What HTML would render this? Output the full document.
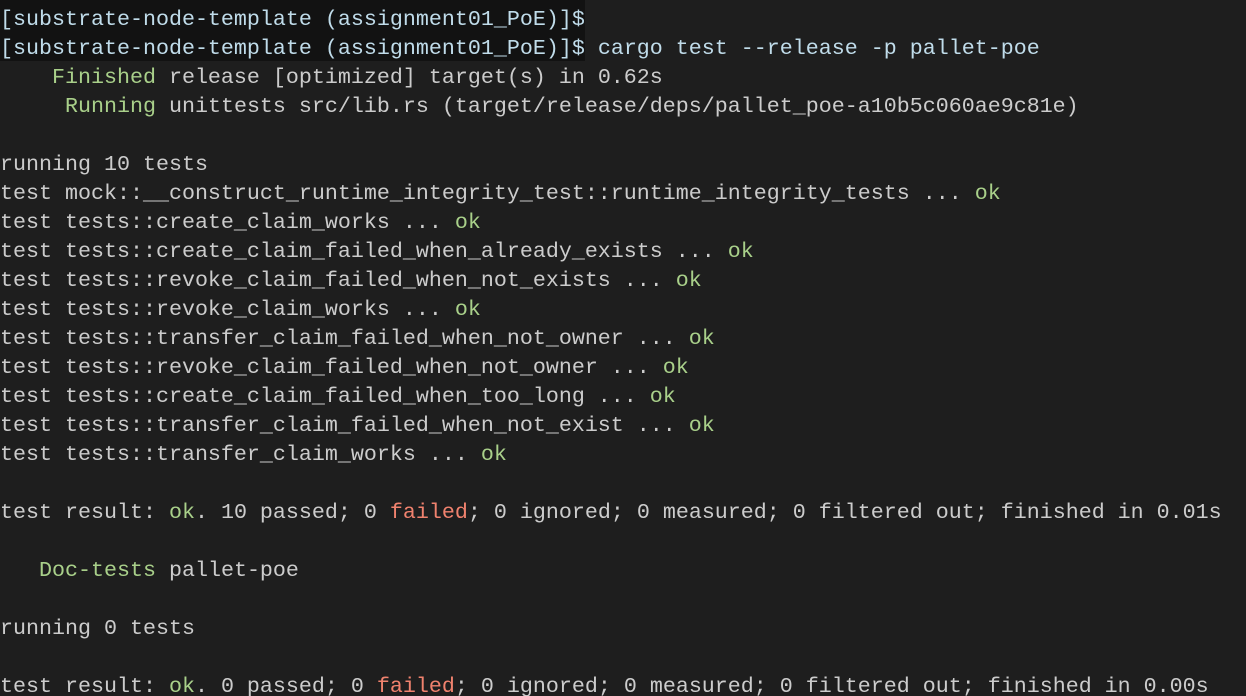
<!DOCTYPE html>
<html><head><meta charset="utf-8"><style>
html,body{margin:0;padding:0;background:#1e1e1e;width:1246px;height:696px;overflow:hidden;position:relative}
.bg{position:absolute;left:0;top:0;width:585px;height:61px;background:#121212}
pre{position:relative;margin:0;padding:5px 0 0 0;font-family:"Liberation Mono","DejaVu Sans Mono",monospace;font-size:21.67px;line-height:29px;color:#cccccc;white-space:pre}
.p{color:#c0dcea}
.c{color:#c0dcea}
.g{color:#a9d08a}
.ok{color:#a9d08a}
.r{color:#f0826e}
</style></head><body><div class="bg"></div><pre><span class="p">[substrate-node-template (assignment01_PoE)]$</span>
<span class="p">[substrate-node-template (assignment01_PoE)]$</span><span class="c"> cargo test --release -p pallet-poe</span>
    <span class="g">Finished</span> release [optimized] target(s) in 0.62s
     <span class="g">Running</span> unittests src/lib.rs (target/release/deps/pallet_poe-a10b5c060ae9c81e)

running 10 tests
test mock::__construct_runtime_integrity_test::runtime_integrity_tests ... <span class="ok">ok</span>
test tests::create_claim_works ... <span class="ok">ok</span>
test tests::create_claim_failed_when_already_exists ... <span class="ok">ok</span>
test tests::revoke_claim_failed_when_not_exists ... <span class="ok">ok</span>
test tests::revoke_claim_works ... <span class="ok">ok</span>
test tests::transfer_claim_failed_when_not_owner ... <span class="ok">ok</span>
test tests::revoke_claim_failed_when_not_owner ... <span class="ok">ok</span>
test tests::create_claim_failed_when_too_long ... <span class="ok">ok</span>
test tests::transfer_claim_failed_when_not_exist ... <span class="ok">ok</span>
test tests::transfer_claim_works ... <span class="ok">ok</span>

test result: <span class="ok">ok</span>. 10 passed; 0 <span class="r">failed</span>; 0 ignored; 0 measured; 0 filtered out; finished in 0.01s

   <span class="g">Doc-tests</span> pallet-poe

running 0 tests

test result: <span class="ok">ok</span>. 0 passed; 0 <span class="r">failed</span>; 0 ignored; 0 measured; 0 filtered out; finished in 0.00s
</pre></body></html>
